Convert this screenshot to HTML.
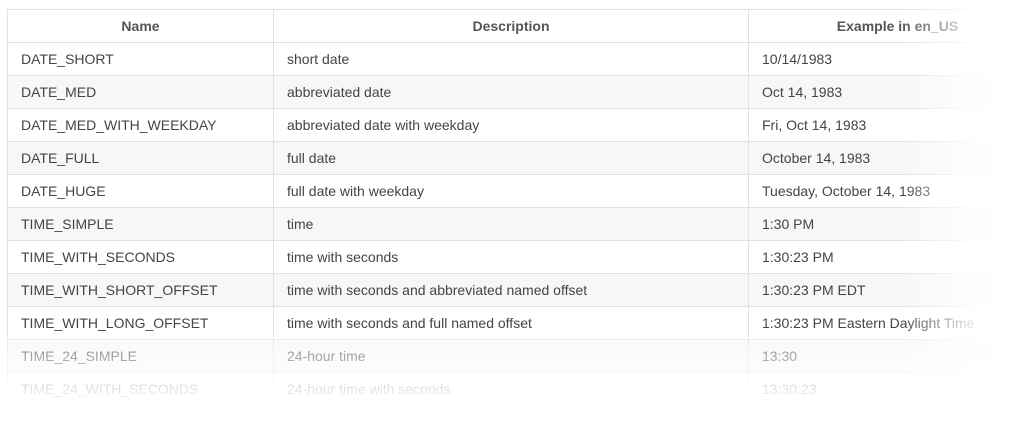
<!DOCTYPE html>
<html><head><style>
body{margin:0;width:1031px;height:435px;background:#fff;position:relative;overflow:hidden;font-family:"Liberation Sans",sans-serif;}
table{position:absolute;left:7px;top:9px;border-collapse:collapse;width:1040px;table-layout:fixed;font-size:14px;color:#444;}
td,th{border:1px solid #e2e2e2;height:32px;padding:0 0 0 13px;text-align:left;white-space:nowrap;overflow:hidden;}
th{text-align:center;padding:0;font-weight:bold;color:#555;font-size:14px;}
tr:nth-child(odd) td{background:#f7f7f6;}
col.a{width:266px}col.b{width:475px}
.fr{position:absolute;top:0;right:0;width:130px;height:435px;background:linear-gradient(to right,rgba(255,255,255,0),rgba(255,255,255,.8) 50%,#fff 80%);}
.fb{position:absolute;left:0;top:338px;width:1031px;height:97px;background:linear-gradient(to bottom,rgba(255,255,255,.3),rgba(255,255,255,.75) 40%,#fff 72%);}
</style></head><body>
<table><colgroup><col class="a"><col class="b"><col></colgroup>
<tr><th>Name</th><th>Description</th><th>Example in en_US</th></tr>
<tr><td>DATE_SHORT</td><td>short date</td><td>10/14/1983</td></tr>
<tr><td>DATE_MED</td><td>abbreviated date</td><td>Oct 14, 1983</td></tr>
<tr><td>DATE_MED_WITH_WEEKDAY</td><td>abbreviated date with weekday</td><td>Fri, Oct 14, 1983</td></tr>
<tr><td>DATE_FULL</td><td>full date</td><td>October 14, 1983</td></tr>
<tr><td>DATE_HUGE</td><td>full date with weekday</td><td>Tuesday, October 14, 1983</td></tr>
<tr><td>TIME_SIMPLE</td><td>time</td><td>1:30 PM</td></tr>
<tr><td>TIME_WITH_SECONDS</td><td>time with seconds</td><td>1:30:23 PM</td></tr>
<tr><td>TIME_WITH_SHORT_OFFSET</td><td>time with seconds and abbreviated named offset</td><td>1:30:23 PM EDT</td></tr>
<tr><td>TIME_WITH_LONG_OFFSET</td><td>time with seconds and full named offset</td><td>1:30:23 PM Eastern Daylight Time</td></tr>
<tr><td>TIME_24_SIMPLE</td><td>24-hour time</td><td>13:30</td></tr>
<tr><td>TIME_24_WITH_SECONDS</td><td>24-hour time with seconds</td><td>13:30:23</td></tr>
</table>
<div class="fr"></div><div class="fb"></div>
</body></html>
